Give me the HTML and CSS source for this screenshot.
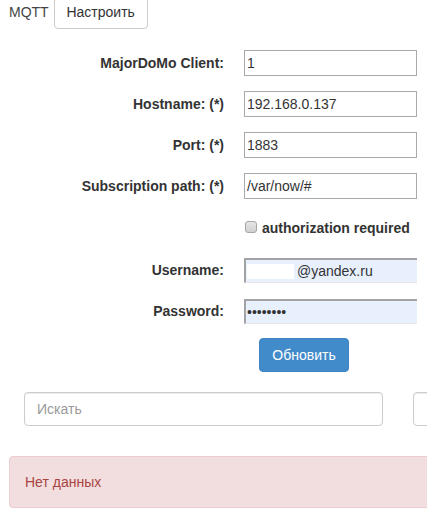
FILE: index.html
```html
<!DOCTYPE html>
<html lang="ru">
<head>
    <meta charset="UTF-8">
    <meta name="viewport" content="width=device-width, initial-scale=1.0">
    <title>MQTT</title>
    <link rel="stylesheet" href="styles.css">
</head>
<body>
    <div class="tabs">
        <span class="tab-title">MQTT</span>
        <button type="button" class="btn btn-default">Настроить</button>
    </div>
    <form class="mqtt-form">
        <div class="form-row">
            <label for="client">MajorDoMo Client:</label>
            <input type="text" id="client" class="field" value="1">
        </div>
        <div class="form-row">
            <label for="host">Hostname: (*)</label>
            <input type="text" id="host" class="field" value="192.168.0.137">
        </div>
        <div class="form-row">
            <label for="port">Port: (*)</label>
            <input type="text" id="port" class="field" value="1883">
        </div>
        <div class="form-row">
            <label for="path">Subscription path: (*)</label>
            <input type="text" id="path" class="field" value="/var/now/#">
        </div>
        <div class="form-row check-row">
            <span></span>
            <label class="check"><input type="checkbox" id="auth"> authorization required</label>
        </div>
        <div class="form-row">
            <label for="user">Username:</label>
            <input type="text" id="user" class="field autofill user" value="@yandex.ru">
        </div>
        <div class="form-row">
            <label for="pass">Password:</label>
            <input type="password" id="pass" class="field autofill" value="12345678">
        </div>
        <div class="form-actions">
            <button type="button" class="btn btn-primary">Обновить</button>
        </div>
    </form>
    <div class="search-row">
        <input type="text" class="form-control search" placeholder="Искать">
        <input type="text" class="form-control">
    </div>
    <div class="alert alert-danger">Нет данных</div>
</body>
</html>
```

FILE: styles.css
```css
body{
    margin: 0;
    font: 14px/20px "Liberation Sans", Arial, sans-serif;
    color: #333;
    background-color: #fff;
    overflow: hidden;
}
.tabs{
    display: flex;
    align-items: center;
    gap: 5px;
    margin-top: -5px;
    padding-left: 9px;
}
.tab-title{
    color: #444;
}
.btn{
    font: inherit;
    height: 34px;
    padding: 0 12px;
    border: 1px solid #ccc;
    border-radius: 4px;
    background-color: #fff;
    color: #333;
    cursor: pointer;
}
.btn-default{
    width: 94px;
    padding: 0;
}
.btn-primary{
    background-color: #428bca;
    border-color: #3f85c2;
    color: #fff;
    width: 90px;
}
.mqtt-form{
    margin: 21px 0 0;
}
.form-row{
    display: grid;
    grid-template-columns: 224px 173px;
    column-gap: 20px;
    align-items: center;
    height: 26px;
    margin-bottom: 15px;
}
.form-row > label{
    text-align: right;
    font-weight: bold;
}
.field{
    box-sizing: border-box;
    height: 26px;
    padding: 0 2px;
    border: 1px solid #a9a9a9;
    font: 14px "Liberation Sans", Arial, sans-serif;
    color: #333;
    outline: none;
}
.autofill{
    height: 25px;
    background-color: #e8f0fe;
    border-top: 2px solid #a3a3a3;
    border-left: 2px solid #a3a3a3;
    border-right: none;
    border-bottom: 1px solid #e6e6e6;
    padding-left: 1px;
}
.user{
    padding-left: 51px;
    background-image: linear-gradient(#fff, #fff);
    background-size: 47px 15px;
    background-position: 1px 4px;
    background-repeat: no-repeat;
}
.check-row{
    height: 28px;
}
.check{
    display: flex;
    align-items: center;
    font-weight: bold;
}
.check input{
    appearance: none;
    box-sizing: border-box;
    width: 12px;
    height: 12px;
    margin: -3px 5px 0 1px;
    border: 1px solid #a6a6a6;
    border-radius: 3px;
    background: linear-gradient(#e6e6e6, #cfcfcf);
}
.form-actions{
    margin-top: -1px;
    padding-left: 259px;
}
.search-row{
    display: flex;
    gap: 30px;
    margin: 20px 0 0 24px;
}
.form-control{
    flex: none;
    box-sizing: border-box;
    width: 359px;
    height: 34px;
    padding: 6px 12px;
    border: 1px solid #ccc;
    border-radius: 4px;
    font: 14px "Liberation Sans", Arial, sans-serif;
    color: #555;
    box-shadow: inset 0 1px 1px rgba(0,0,0,.075);
}
.form-control::placeholder{
    color: #999;
}
.alert{
    margin: 30px 0 0 9px;
    width: 600px;
    padding: 15px;
    border: 1px solid #ebccd1;
    border-radius: 4px;
}
.alert-danger{
    background-color: #f2dede;
    color: #a94442;
}
```
